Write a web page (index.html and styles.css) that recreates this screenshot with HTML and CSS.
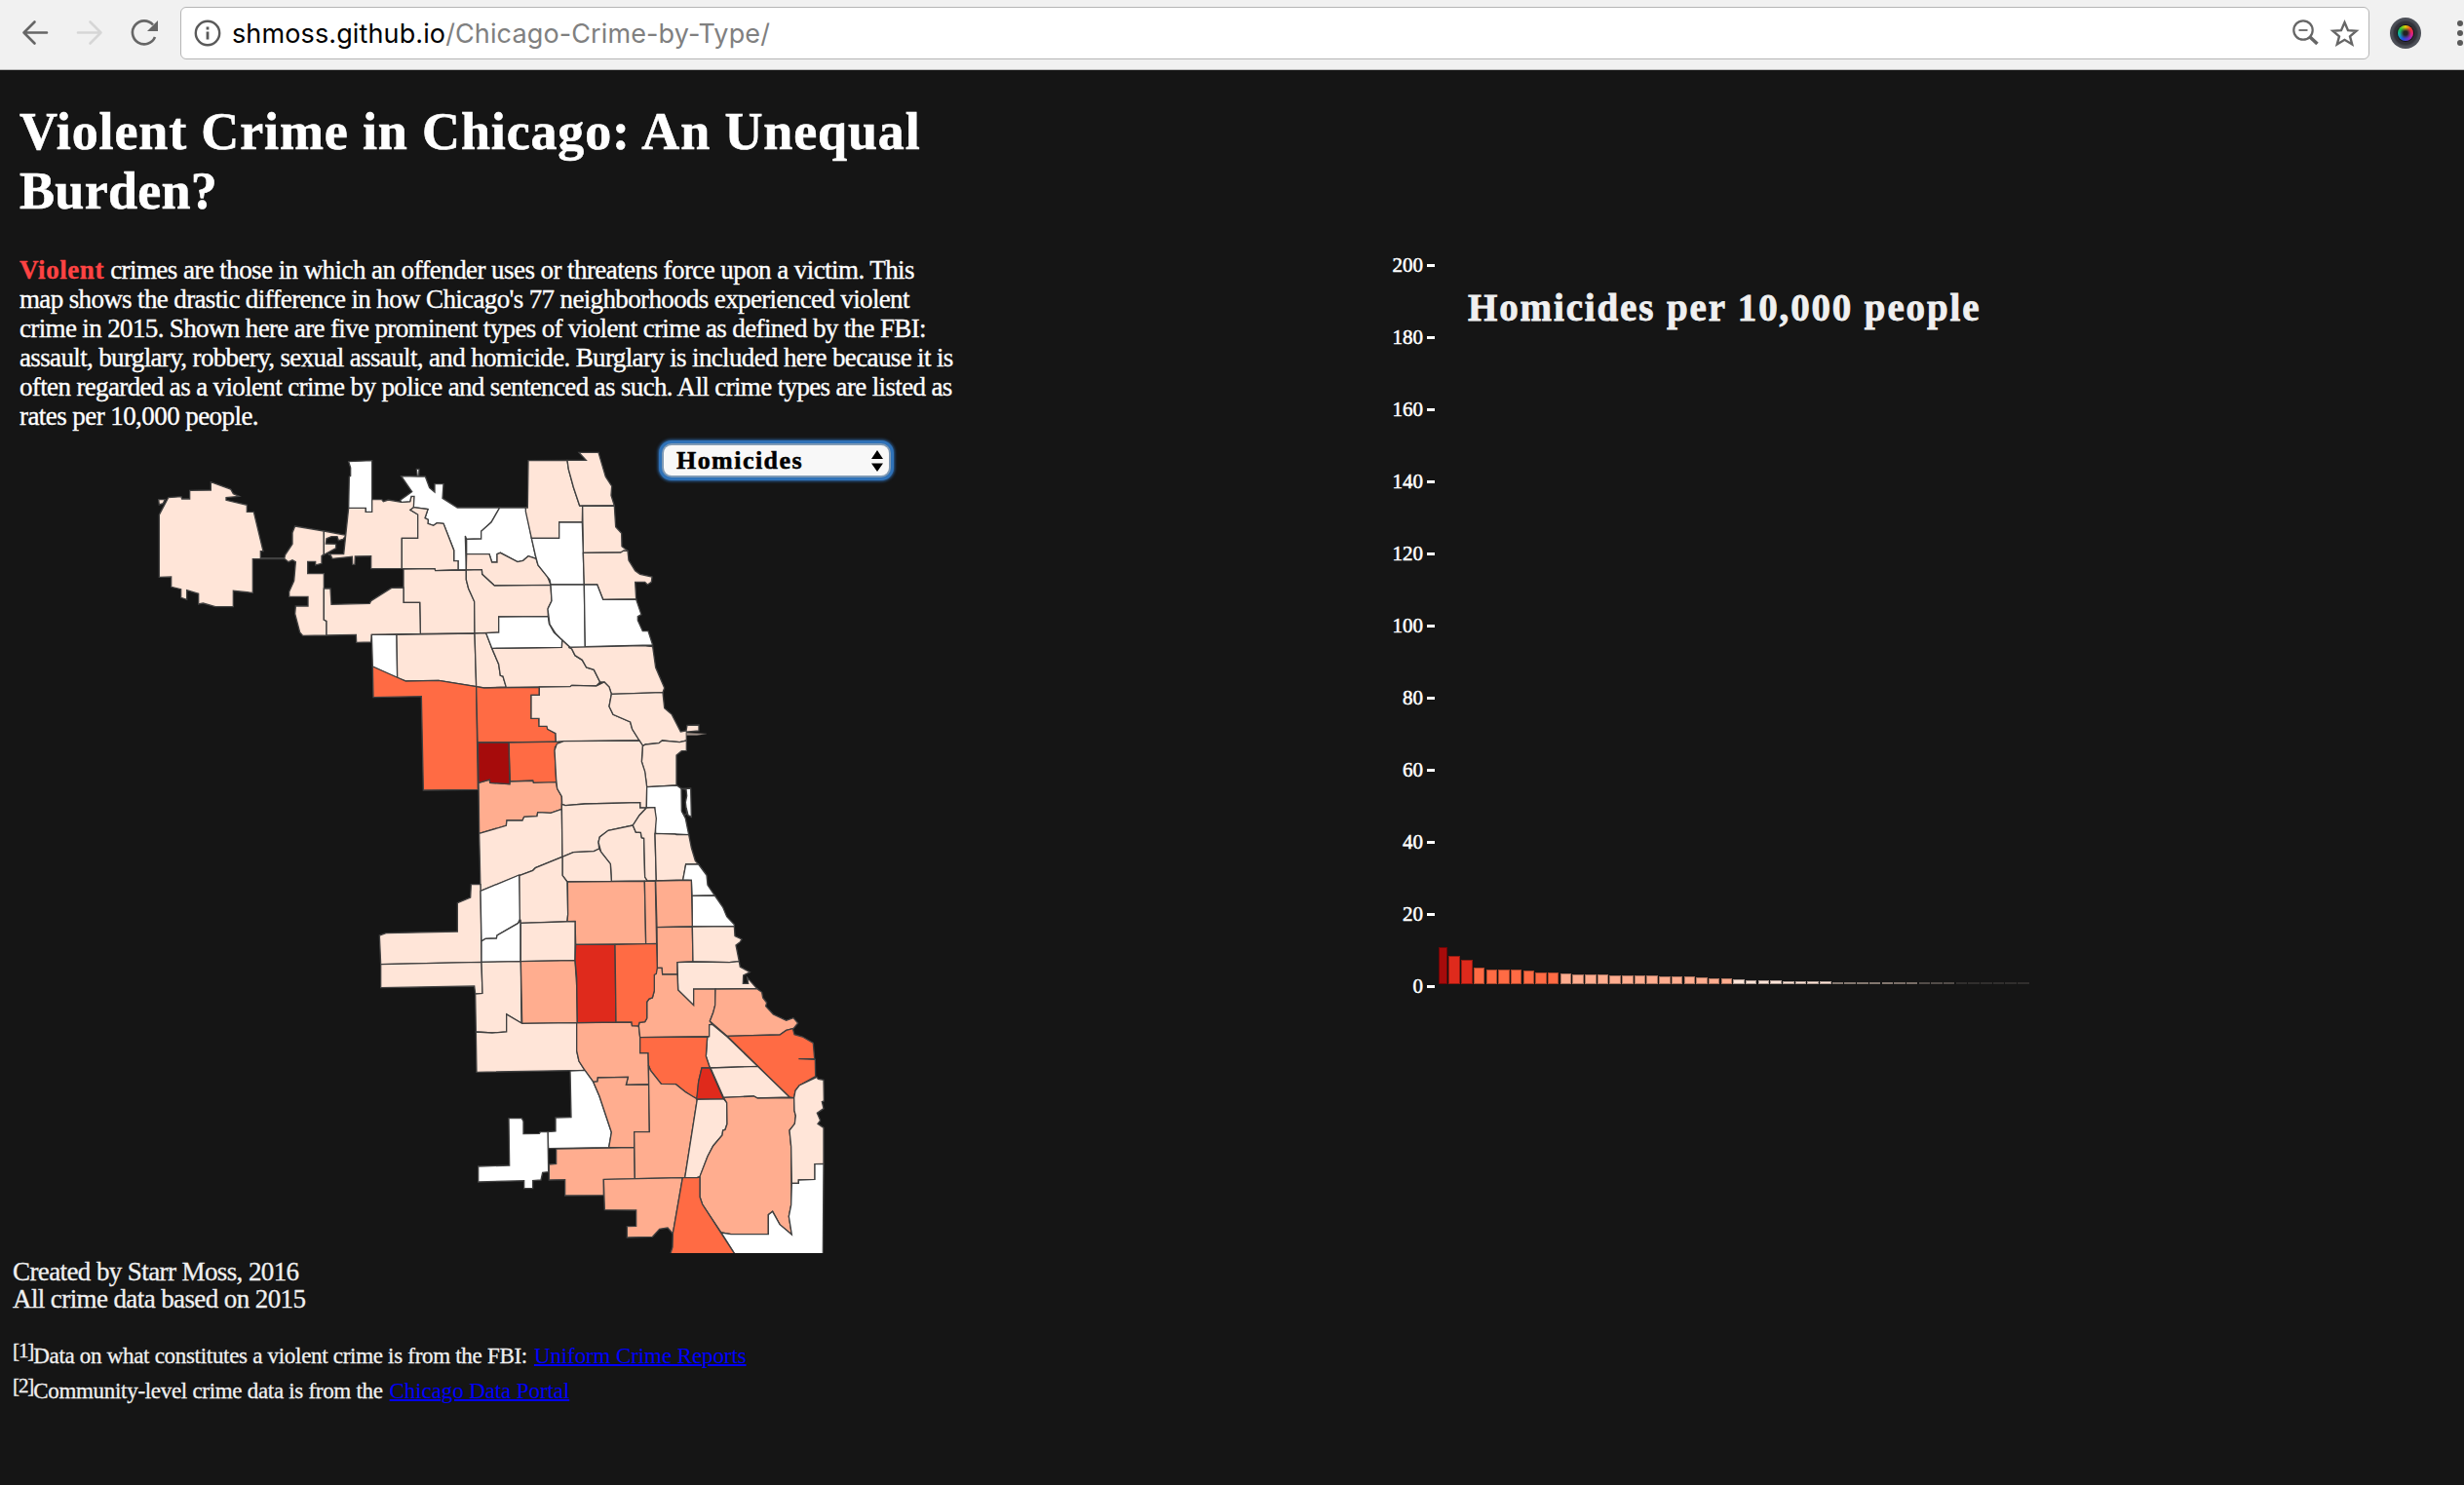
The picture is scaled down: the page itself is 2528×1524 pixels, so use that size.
FILE: index.html
```html
<!DOCTYPE html>
<html lang="en">
<head>
<meta charset="utf-8">
<title>Violent Crime in Chicago</title>
<link rel="stylesheet" href="styles.css">
</head>
<body>
<header class="toolbar">
  <svg class="nav-icons" width="185" height="70" viewBox="0 0 185 70" fill="none" stroke-width="2.6" stroke-linecap="round" stroke-linejoin="round">
    <path stroke="#666" d="M48 33.5H24.5M35.5 22.5L24.5 33.5L35.5 44.5"/>
    <path stroke="#d6d6d6" d="M80 33.5H103.500M92.500 22.500L103.500 33.500L92.500 44.500"/>
    <path stroke="#666" stroke-linecap="butt" d="M159 38A12 12 0 1 1 157 25.500"/>
    <path fill="#666" stroke="none" d="M162 21V32H151Z"/>
  </svg>
  <div class="address">
    <svg width="28" height="28" viewBox="0 0 28 28" fill="none" stroke="#5a5a5a"><circle cx="14" cy="14" r="12.200" stroke-width="2.400"/><path stroke-width="2.800" d="M14 12.500V20.500M14 7.500V10.500"/></svg>
    <div class="url"><span class="host">shmoss.github.io</span><span class="path">/Chicago-Crime-by-Type/</span></div>
    <svg class="tools" width="72" height="30" viewBox="0 0 72 30" fill="none" stroke="#666">
      <circle cx="13" cy="12" r="9.700" stroke-width="2.200"/><path stroke-width="1.800" d="M8.500 12H17.500"/><path stroke-width="3.600" d="M20 19L27.500 26"/>
      <path stroke-width="2.400" d="M55.500 4L59 12.200L67.500 12.700L61 18.300L63.200 26.500L55.500 21.800L47.800 26.500L50 18.300L43.500 12.700L52 12.200Z"/>
    </svg>
  </div>
  <div class="lens"><i></i></div>
  <div class="dots"><i></i><i></i><i></i></div>
</header>
<main>
  <section class="story">
    <h1><span>Violent Crime in Chicago: An Unequal</span><span>Burden?</span></h1>
    <p class="intro">
      <span><b>Violent</b> crimes are those in which an offender uses or threatens force upon a victim. This</span>
      <span>map shows the drastic difference in how Chicago's 77 neighborhoods experienced violent</span>
      <span>crime in 2015. Shown here are five prominent types of violent crime as defined by the FBI:</span>
      <span>assault, burglary, robbery, sexual assault, and homicide. Burglary is included here because it is</span>
      <span>often regarded as a violent crime by police and sentenced as such. All crime types are listed as</span>
      <span>rates per 10,000 people.</span>
    </p>
    <div class="map">
      <svg width="740" height="836" viewBox="0 0 2220 2508">
        <g>
          <path class="p" d="M68 188L88 188L82 200L70 204Z"/>
          <path class="p" d="M70 235L98 182L138 179L140 186L164 186L164 160L229 159L229 134L290 156L298 170L316 178L276 182L276 190L340 205L340 226L361 226L390 347L382 347L382 367L455 368L455 371L358 371L358 475L298 469L298 518L243 518L205 507L191 510L191 478L155 467L155 496L137 490L137 464L107 457L107 426L70 427Z"/>
          <path class="p" d="M488 270L577 285L577 356L570 362L570 385L551 390L551 379L527 379L527 416L577 416L577 558L585 562L585 606L512 607L503 597L488 540L490 516L528 516L528 487L470 487L470 472L485 438L490 380L480 374L468 380L455 370L458 358L480 325L480 290Z"/>
          <path class="p" d="M577 285L645 298L636 310L622 314L618 302L600 302L585 308L583 324L614 325L614 338L577 358Z"/>
          <path class="p" d="M653 214L706 214L706 226L724 226L724 188L755 188L760 194L775 189L815 196L842 194L846 178L855 178L856 212L843 220L866 234L866 307L817 307L817 400L722 401L722 362L673 363L672 388L665 388L664 364L603 370L598 360L590 356L638 356Z"/>
          <path class="w" d="M653 71L725 68L725 226L706 226L706 214L653 214L655 118L659 115L659 90Z"/>
          <path class="w" d="M815 116L865 117L862 94L870 94L869 117L889 117L902 152L918 165L918 140L945 140L942 184L988 213L1118 213L1092 258L1061 286L1061 309L1016 310L1012 300L1015 405L990 404L990 377L977 377L977 344L945 262L925 260L914 268L897 262L898 250L888 245L897 218L853 212L855 178L846 178L842 194L815 196L812 190L848 164Z"/>
          <path class="p" d="M817 307L866 307L866 234L843 220L853 212L897 218L888 245L898 250L897 262L914 268L925 260L945 262L977 344L977 377L990 377L990 404L920 407L918 401L817 400Z"/>
          <path class="w" d="M1118 213L1198 213L1215 300L1230 370L1206 362L1190 376L1173 380L1120 352L1110 356L1110 381L1094 381L1086 356L1016 356L1016 310L1061 309L1061 286L1092 258Z"/>
          <path class="p" d="M1016 356L1086 356L1094 381L1110 381L1110 356L1120 352L1173 380L1190 376L1206 362L1230 370L1236 390L1265 425L1275 451L1102 453L1064 418L1063 404L1015 405Z"/>
          <path class="p" d="M822 402L918 401L920 407L1015 405L1015 435L1022 462L1040 502L1041 600L874 601L872 505L822 505Z"/>
          <path class="p" d="M1015 405L1063 404L1064 418L1102 453L1275 451L1278 500L1267 522L1267 548L1115 549L1115 597L1041 600L1040 502L1022 462L1015 435Z"/>
          <path class="p" d="M577 462L597 462L600 511L718 508L722 500L785 460L822 459L822 505L872 505L874 601L724 604L722 627L677 628L676 604L585 606L585 562L577 558Z"/>
          <path class="w" d="M724 604L801 604L803 738L727 702Z"/>
          <path class="p" d="M801 604L1041 600L1046 764L930 745L829 747L803 738Z"/>
          <path class="p" d="M1041 600L1076 599L1094 646L1115 695L1120 730L1128 732L1138 765L1070 768L1046 764Z"/>
          <path class="p" d="M1094 646L1309 643L1310 620L1340 648L1350 668L1372 682L1385 705L1408 712L1427 750L1415 762L1340 760L1335 764L1138 766L1128 732L1120 730L1115 695Z"/>
          <path class="w" d="M1076 599L1115 597L1115 549L1267 548L1270 570L1285 597L1310 620L1309 643L1094 646Z"/>
          <path class="o" d="M727 702L829 747L930 745L1046 764L1051 1081L883 1083L877 794L729 797Z"/>
          <path class="o" d="M1046 764L1070 768L1240 766L1240 790L1215 790L1215 862L1238 862L1240 886L1265 886L1267 895L1290 908L1291 934L1050 936Z"/>
          <path class="o" d="M1146 936L1305 933L1288 950L1288 970L1292 1060L1222 1060L1220 1053L1150 1056Z"/>
        </g>
        <g transform="translate(960 0)">
          <path class="p" d="M246 68L366 67L370 95L385 150L404 207L413 208L412 258L341 258L341 307L256 307L238 225L238 213L244 213Z"/>
          <path class="p" d="M366 67L424 67L402 43L462 43L484 118L503 147L501 175L511 207L404 207L385 150L370 95Z"/>
          <path class="p" d="M413 208L511 207L515 272L533 292L534 332L552 346L530 351L415 352Z"/>
          <path class="w" d="M256 307L341 307L341 258L412 258L418 450L315 450L312 435L276 390L268 360Z"/>
          <path class="p" d="M415 352L530 351L540 345L552 346L555 375L575 407L590 418L627 426L625 442L613 450L605 442L575 442L578 495L476 496L458 450L418 450Z"/>
          <path class="w" d="M315 450L418 450L421 643L375 643L345 615L330 600L312 572L306 525L318 500Z"/>
          <path class="w" d="M418 450L458 450L476 496L578 495L594 542L583 548L583 560L598 593L615 593L629 636L421 641Z"/>
          <path class="p" d="M370 643L600 638L629 641L638 705L665 768L660 782L502 787L495 765L480 750L467 750L448 712L425 705L412 682L390 668L380 648Z"/>
          <path class="p" d="M280 765L375 764L380 760L455 762L480 750L495 765L502 787L495 825L507 850L560 873L566 895L588 930L345 933L331 934L330 908L305 895L303 886L279 886L279 862L255 862L255 790L280 790Z"/>
          <path class="p" d="M502 787L660 782L665 830L688 850L715 903L732 900L735 883L771 882L771 900L733 903L733 930L712 935L658 930L648 938L607 942L598 947L588 930L566 895L560 873L507 850L495 825Z"/>
          <path class="pier" d="M733 906L795 909L765 914L733 914Z"/>
          <path class="p" d="M598 947L607 942L648 938L658 930L712 935L733 930L733 961L718 962L702 975L702 1068L611 1073L605 1030L595 995Z"/>
        </g>
        <g transform="translate(1080 870)">
          <path class="s" d="M-27 190L7 180L8 190L68 194L70 186L140 184L142 190L212 188L215 208L229 232L229 271L195 283L155 281L153 293L113 295L108 306L60 306L58 322L-25 346Z"/>
          <path class="d" d="M-29 66L66 66L69 194L8 190L7 180L-27 190Z"/>
          <path class="p" d="M214 70L235 62L468 60L478 75L475 125L485 155L491 203L490 268L470 267L470 251L300 255L240 260L230 256L229 232L215 208L212 180L207 90Z"/>
          <path class="w" d="M491 203L583 198L597 208L626 207L628 295L618 290L613 270L600 280L610 300L620 350L577 348L518 346L515 266L490 267Z"/>
          <path class="hole" d="M597 208L612 211L614 230L610 250L614 285L606 290L598 277Z"/>
          <path class="p" d="M-25 346L58 322L60 306L108 306L113 295L153 293L155 281L195 283L229 271L231 418L148 452L140 460L98 476L-21 523Z"/>
          <path class="p" d="M229 256L240 260L300 255L470 251L470 267L490 267L468 290L448 321L372 337L346 357L342 373L344 393L328 401L265 404L231 418Z"/>
          <path class="p" d="M448 321L457 342L472 343L475 359L482 361L485 480L493 492L382 493L379 440L350 403L342 373L346 357L372 337Z"/>
          <path class="p" d="M490 267L515 266L520 300L516 350L520 492L493 492L485 480L482 361L475 359L472 343L457 342L448 321L468 290Z"/>
          <path class="p" d="M516 346L577 348L582 350L620 350L628 390L640 430L650 441L611 441L602 489L520 492Z"/>
          <path class="p" d="M231 418L265 404L328 401L344 393L350 403L379 440L382 493L246 495L231 475Z"/>
          <path class="p" d="M98 476L140 460L148 452L231 418L231 475L246 495L248 595L246 617L103 622L98 600Z"/>
          <path class="w" d="M611 441L650 441L675 475L678 505L700 537L630 538L628 490L602 489Z"/>
          <path class="w" d="M630 538L700 537L725 573L737 602L760 626L760 632L631 633Z"/>
          <path class="s" d="M247 495L484 493L488 686L272 688L270 616L246 617L248 595Z"/>
          <path class="s" d="M484 493L517 492L521 685L488 686Z"/>
          <path class="s" d="M518 492L628 490L631 633L522 635Z"/>
          <path class="s" d="M522 635L631 633L633 741L585 743L585 780L538 780L537 760L523 760Z"/>
          <path class="p" d="M631 633L760 632L762 662L783 672L778 680L765 690L775 740L745 743L633 741Z"/>
          <path class="p" d="M585 743L633 741L745 743L775 740L778 757L808 773L788 783L787 808L803 808L800 790L830 824L635 826L635 875L587 828Z"/>
        </g>
        <g transform="translate(690 1320)">
          <path class="p" d="M340 53L369 53L372 292L62 299L58 210L78 203L298 198L298 110L338 93Z"/>
          <path class="p" d="M62 299L372 292L375 388L353 390L350 366L62 371Z"/>
          <path class="w" d="M369 73L488 24L490 160L484 173L420 210L418 219L384 220L372 228Z"/>
          <path class="w" d="M372 228L384 220L418 219L420 210L484 173L492 165L492 290L372 292Z"/>
          <path class="p" d="M493 172L660 167L660 287L493 290Z"/>
          <path class="p" d="M372 292L493 290L495 481L449 453L449 507L405 510L355 507L353 390L375 388Z"/>
          <path class="s" d="M493 290L660 287L665 365L667 479L497 481Z"/>
          <path class="p" d="M355 507L405 510L449 507L449 453L497 481L665 479L665 565L672 597L690 625L357 631Z"/>
          <path class="s" d="M665 479L834 477L836 488L856 488L860 524L860 572L885 572L887 669L817 670L823 646L730 648L729 660L716 661L690 625L672 597L665 565Z"/>
          <path class="w" d="M645 627L690 625L716 661L735 705L772 816L764 863L578 866L576 815L600 813L600 771L648 770Z"/>
          <path class="w" d="M456 773L496 773L501 782L501 821L550 820L553 815L576 815L578 938L560 940L555 963L530 965L530 989L503 989L503 965L362 969L362 921L458 918Z"/>
          <path class="s" d="M716 661L729 660L730 648L823 646L817 670L887 669L889 815L842 816L842 863L764 863L772 816L735 705Z"/>
          <path class="s" d="M602 867L842 863L844 960L748 962L748 1010L629 1011L629 962L580 963L580 915L602 913Z"/>
        </g>
        <g transform="translate(1260 1290)">
          <path class="r" d="M92 268L213 268L216 507L97 509L95 370L90 315Z"/>
          <path class="s" d="M334 360L343 340L357 340L359 360L405 360L407 408L455 455L455 405L522 405L521 455L515 478L505 504L512 514L503 515L503 551L290 554L286 519L288 508L305 506L311 495L311 445L318 435L328 432L334 410Z"/>
          <path class="o" d="M213 268L341 265L343 340L340 358L334 361L334 410L328 432L318 435L311 445L311 495L305 506L288 508L285 519L265 518L264 507L216 507Z"/>
          <path class="s" d="M522 405L650 404L665 415L668 432L680 447L677 458L700 483L740 502L762 494L776 510L762 527L740 532L720 546L558 550L505 504L515 478L521 455Z"/>
          <path class="o" d="M558 550L720 546L740 532L760 527L765 545L790 552L823 571L827 620L778 620L829 622L830 674L780 702L768 718L764 740L750 738Z"/>
          <path class="p" d="M503 515L512 514L558 552L652 643L505 648L493 612L497 553L503 551Z"/>
          <path class="o" d="M290 554L497 552L493 612L505 648L480 648L470 690L466 742L450 737L430 722L400 698L355 697L322 655L316 640L315 602L290 602Z"/>
          <path class="p" d="M507 648L652 643L750 738L652 741L640 735L547 739Z"/>
          <path class="s" d="M316 640L322 655L355 697L400 698L430 722L466 744L428 986L274 989L272 845L319 845Z"/>
          <path class="p" d="M466 744L547 743L557 755L558 820L552 838L545 840L543 855L515 888L498 920L475 982L465 986L428 986Z"/>
          <path class="s" d="M547 739L640 735L652 741L764 740L765 780L769 795L766 820L750 840L755 890L756 1020L755 1070L748 1105L757 1161L720 1130L698 1090L685 1100L685 1160L570 1160L540 1155L482 1068L474 1045L474 982L498 920L515 888L543 855L545 840L552 838L558 820L557 755Z"/>
          <path class="r" d="M480 648L505 648L547 743L464 744L470 690Z"/>
          <path class="p" d="M764 740L768 718L780 702L834 676L838 682L855 685L856 750L850 752L855 773L835 787L845 810L837 820L855 832L855 943L828 944L828 991L778 993L778 1003L757 1003L755 890L750 840L766 820L769 795L765 780Z"/>
          <path class="w" d="M757 1003L778 1003L778 993L828 991L828 944L855 943L853 1225L584 1225L540 1155L570 1160L685 1160L685 1100L698 1090L720 1130L757 1161L748 1105L755 1070Z"/>
          <path class="s" d="M178 991L421 986L391 1158L375 1140L350 1144L328 1168L250 1170L250 1136L278 1135L278 1086L181 1085Z"/>
          <path class="o" d="M421 986L465 986L474 984L474 1045L482 1068L584 1225L382 1225L390 1200L391 1158Z"/>
        </g>
      </svg>
      <div class="select"><span>Homicides</span><svg width="12" height="22" viewBox="0 0 12 22"><path d="M6 0L12 9H0ZM6 22L12 13.500H0Z"/></svg></div>
    </div>
    <footer>
      <p class="credit"><span>Created by Starr Moss, 2016</span><span>All crime data based on 2015</span></p>
      <p class="refs"><sup>[1]</sup><span>Data on what constitutes a violent crime is from the FBI:</span><a>Uniform Crime Reports</a></p>
      <p class="refs"><sup>[2]</sup><span>Community-level crime data is from the</span><a>Chicago Data Portal</a></p>
    </footer>
  </section>
  <section class="chart">
    <div class="axis"><span>200</span><span>180</span><span>160</span><span>140</span><span>120</span><span>100</span><span>80</span><span>60</span><span>40</span><span>20</span><span>0</span></div>
    <div class="plot">
      <h2>Homicides per 10,000 people</h2>
      <div class="bars" id="bars"></div>
    </div>
  </section>
</main>
<script src="chart.js"></script>
</body>
</html>
```
FILE: styles.css
```css
body { margin: 0; background: #151515; color: #fff; font-family: "Liberation Serif", serif; height: 1524px; overflow: hidden; }
h1, h2, p { margin: 0; font-weight: normal; }
.toolbar { box-sizing: border-box; height: 72px; background: #f1f1f1; border-bottom: 1px solid #b4b4b4; display: flex; align-items: flex-start; }
.nav-icons { flex: none; }
.address { box-sizing: border-box; width: 2246px; height: 54px; margin-top: 7px; flex: none; background: #fff; border: 1px solid #b5b5b5; border-radius: 6px; display: flex; align-items: center; padding: 0 8px 0 13px; }
.url { font: 27px/36px Inter, sans-serif; letter-spacing: .12px; margin: 2px 0 0 11px; flex: 1; white-space: pre; }
.host { color: #000; }
.path { color: #808080; }
.lens { width: 32px; height: 32px; flex: none; margin: 18px 0 0 21px; border-radius: 50%; background: radial-gradient(circle, #303038 50%, #4a4d55 60%, #5b5f66); display: flex; align-items: center; justify-content: center; }
.lens i { width: 16px; height: 16px; border-radius: 50%; background: radial-gradient(circle, #222 2px, #3338 4px, transparent 6px), conic-gradient(#e6d000, #f03030, #e0208a, #7030d0, #2050e0, #10b0b0, #20c040, #e6d000); box-shadow: 0 0 0 1px #111; }
.dots { margin: 21px 0 0 37px; flex: none; display: flex; flex-direction: column; gap: 4px; }
.dots i { width: 6px; height: 6px; border-radius: 50%; background: #5a5a5a; }
main { display: grid; grid-template-columns: 1400px 1fr; }
h1 span, .intro > span, .credit span { display: block; white-space: pre; width: max-content; }
h1 { font-weight: bold; font-size: 54px; line-height: 61px; letter-spacing: .86px; padding: 33px 0 0 20px; -webkit-text-stroke: .6px; }
h1 span + span { letter-spacing: .3px; }
.intro { font-size: 27px; line-height: 30px; padding: 35px 0 0 20px; letter-spacing: -.64px; -webkit-text-stroke: .35px; }
.intro > span:first-child { letter-spacing: -.57px; }
.intro > span:last-child { letter-spacing: -.57px; }
.intro b { color: #ff4343; letter-spacing: .57px; }
.map { position: relative; margin: 8px 0 0 140px; height: 836px; }
.map > svg { display: block; }
.map path { stroke: #404040; stroke-width: 4; }
.map .p { fill: #ffe5d8; }
.map .w { fill: #fff; }
.map .s { fill: #ffad8f; }
.map .o { fill: #ff6b44; }
.map .r { fill: #df2a1c; }
.map .d { fill: #a60b0b; }
.map .pier { fill: #a09088; stroke-width: 1; }
.map .hole { fill: #151515; }
.select { position: absolute; left: 541px; top: 7px; width: 231px; height: 31px; background: #f8f8f8; border-radius: 8px; box-shadow: 0 0 0 2px #7f9ab5, 0 0 0 5px #2f72b8, 0 0 3px 6px #2a5f99; box-sizing: border-box; padding: 0 6px 0 13px; display: flex; align-items: center; justify-content: space-between; color: #000; font-weight: bold; font-size: 26px; line-height: 30px; letter-spacing: 1.45px; -webkit-text-stroke: .5px; }
.map .select path { stroke: none; }
footer { padding: 5px 0 0 13px; color: #f0f0f0; -webkit-text-stroke: .3px; }
.credit { font-size: 27px; line-height: 28px; margin-bottom: 27px; letter-spacing: -.6px; }
.refs { font-size: 23px; line-height: 36px; height: 36px; white-space: pre; letter-spacing: -.3px; }
.refs sup { font-size: 21px; line-height: 0; vertical-align: 6px; letter-spacing: -1.1px; }
.refs a { color: #00f; text-decoration: underline; text-decoration-thickness: 2px; letter-spacing: -.1px; margin-left: 7px; -webkit-text-stroke: 0; }
.chart { display: flex; padding-top: 163px; height: 780px; }
.axis { width: 72px; font-size: 21px; -webkit-text-stroke: .5px; }
.axis span { display: flex; height: 74px; line-height: 74px; align-items: center; justify-content: flex-end; gap: 4px; }
.axis span::after { content: ""; width: 8px; height: 3px; background: #fff; }
.plot { width: 620px; height: 775px; display: flex; flex-direction: column; justify-content: space-between; padding-left: 4px; }
h2 { font-size: 39px; font-weight: bold; line-height: 44px; letter-spacing: 1.87px; color: #f0f0f0; padding: 59px 0 0 30px; white-space: nowrap; -webkit-text-stroke: .8px; }
.bars { display: flex; align-items: flex-end; gap: 1.200px; }
.bars i { width: 11.500px; flex: none; box-sizing: border-box; border: 1px solid #0005; }
.bars i:first-child { width: 9.300px; }
```
FILE: chart.js
```js
// Bar heights in pixels, one per community area, sorted from highest rate
var heights = [38, 29, 25, 17.5, 15, 15, 15, 14.5, 12.5, 12, 11, 10.5, 10, 10, 9.5, 9.5, 9, 9, 8, 8, 8, 7, 6, 6,
  5, 4.5, 4, 4, 3.5, 3, 3, 3, 2.5, 2.5, 2, 2, 2, 1, 1, 1, 1, 1, 1, 1, 1, 1, 1, 1];

// Each entry is [first index past the band, colour]
var bands = [[1, '#a60b0b'], [3, '#df2a1c'], [10, '#ff6b44'], [24, '#ffad8f'], [32, '#ffe5d8'],
  [37, '#c4b2a6'], [39, '#b5a49a'], [42, '#7c726c'], [48, '#484644']];

document.getElementById('bars').innerHTML = heights.map(function (h, i) {
  var band = bands.find(function (b) { return i < b[0]; });
  return '<i style="height:' + h + 'px;background:' + band[1] + '"></i>';
}).join('');
```
